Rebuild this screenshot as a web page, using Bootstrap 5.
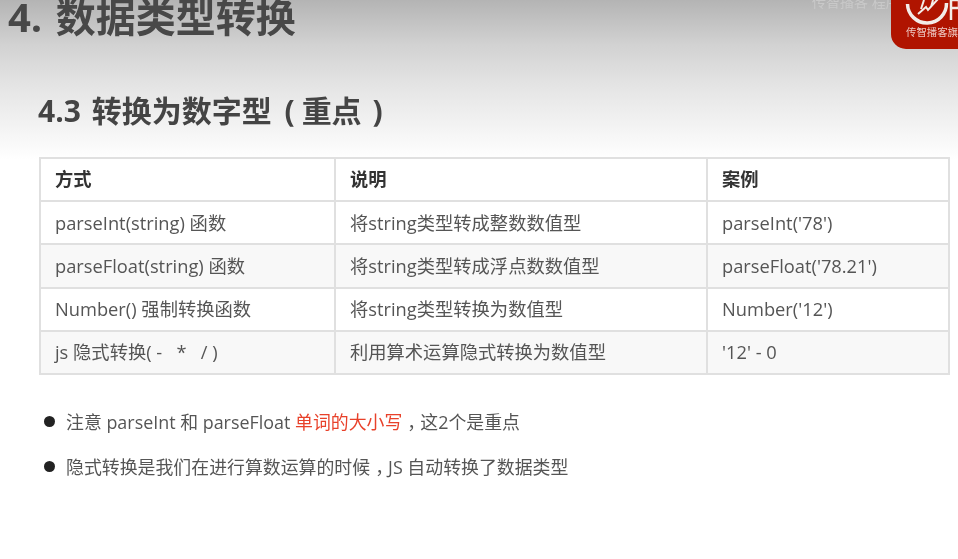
<!doctype html>
<html lang="zh">
<head>
<meta charset="utf-8">
<title>数据类型转换</title>
<link href="https://cdn.jsdelivr.net/npm/bootstrap@5.3.0/dist/css/bootstrap.min.css" rel="stylesheet">
<style>
html,body{height:559px;overflow:hidden;background:#fff}
body{font-family:"Open Sans","Noto Sans CJK SC",sans-serif;color:#555;position:relative;filter:blur(.35px)}
.slide-head{height:159px;background:linear-gradient(#b4b4b4 0,#d2d2d2 45px,#e6e6e6 90px,#fff 160px);overflow:hidden;padding-left:8px}
.slide-title{font-size:40px;line-height:48px;font-weight:700;color:#484848;margin:-7px 0 0;word-spacing:3px}
.slide-sub{font-size:30px;line-height:40px;font-weight:700;color:#444;margin:50px 0 0 30px;word-spacing:3px}
.pl{margin-left:2px;margin-right:7px}
.sheet{margin:-2px 8px 0 39px;width:911px;table-layout:fixed;font-size:18.3px;--bs-table-color:#555;--bs-table-bg:#fff}
.sheet th,.sheet td{height:43.2px;padding:0 14px;vertical-align:middle;border:2px solid #e0e0e0;line-height:1}
.sheet th{color:#333;font-weight:700}
.sheet tbody tr:nth-child(even) td{background:#f8f8f8}
.w1{width:295px}.w2{width:372px}
.notes{margin:0;padding:11px 0 0 44px;list-style:none;font-size:17.9px;color:#555}
.notes li{display:flex;align-items:center;line-height:24px;margin-bottom:21px}
.dot{width:11px;height:11px;border-radius:50%;background:#222;margin-right:11px;flex:none}
.hot{color:#e8412a}
.cm{font-feature-settings:"halt";padding:0 4px 0 5px}
.brand{position:absolute;top:-6px;right:0;width:67px;height:55px;background:#b01400;border-radius:0 0 0 15px;overflow:hidden;color:#eec9c3;font-size:10.4px;line-height:1}
.brand svg{position:absolute;left:0;top:0}
.brand span{position:absolute;left:15px;top:33px;white-space:nowrap}
.ghost{position:absolute;top:-6px;left:812px;font-size:14px;color:#c9c9c9;line-height:1.2;white-space:nowrap}
</style>
</head>
<body>
<div class="slide-head">
<h1 class="slide-title">4. 数据类型转换</h1>
<h2 class="slide-sub">4.3 转换为数字型 <span class="pl">(</span>重点 )</h2>
</div>
<table class="table sheet mb-0">
<colgroup><col class="w1"><col class="w2"><col></colgroup>
<thead><tr><th>方式</th><th>说明</th><th>案例</th></tr></thead>
<tbody>
<tr><td>parseInt(string) 函数</td><td>将string类型转成整数数值型</td><td>parseInt('78')</td></tr>
<tr><td>parseFloat(string) 函数</td><td>将string类型转成浮点数数值型</td><td>parseFloat('78.21')</td></tr>
<tr><td>Number() 强制转换函数</td><td>将string类型转换为数值型</td><td>Number('12')</td></tr>
<tr><td>js 隐式转换( -&nbsp;&nbsp; *&nbsp;&nbsp; / )</td><td>利用算术运算隐式转换为数值型</td><td>'12' - 0</td></tr>
</tbody>
</table>
<ul class="notes mt-4">
<li><i class="dot"></i><span>注意 parseInt 和 parseFloat <span class="hot">单词的大小写</span><span class="cm">，</span>这2个是重点</span></li>
<li><i class="dot"></i><span>隐式转换是我们在进行算数运算的时候<span class="cm">，</span>JS 自动转换了数据类型</span></li>
</ul>
<div class="ghost">传智播客 程序员</div>
<div class="brand">
<svg width="67" height="32" viewBox="0 0 67 32" fill="none" stroke="#f3ece8"><path d="M16.5 10a19.5 19.5 0 0 0 39 -1" stroke-width="3.5"/><path d="M27 20l8-7 2 3 10-11M33 6l-3 9M42 6l-2 7" stroke-width="2"/><path d="M60 6h8v8h-8zM60 14v12" stroke-width="2.5"/></svg>
<span>传智播客旗</span>
</div>
</body>
</html>
